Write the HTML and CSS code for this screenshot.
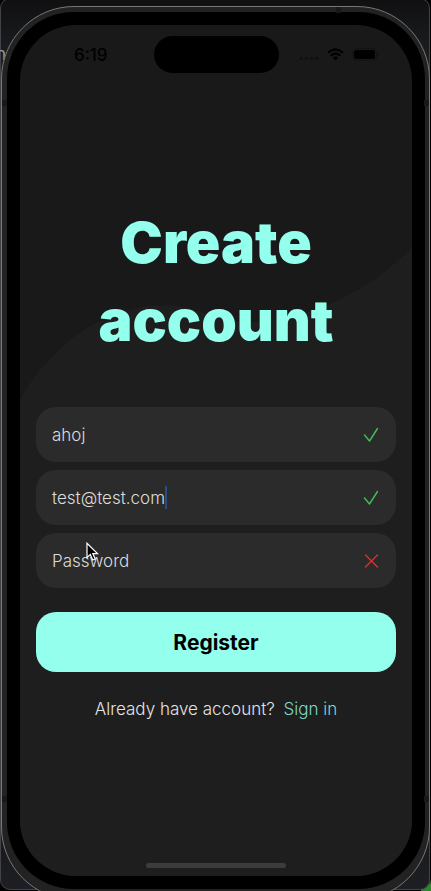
FILE: index.html
```html
<!DOCTYPE html>
<html lang="en">
<head>
<meta charset="utf-8">
<meta name="viewport" content="width=device-width, initial-scale=1">
<title>Create account</title>
<link rel="stylesheet" href="styles.css">
</head>
<body>
<div class="desktop">
  <div class="window" aria-hidden="true"></div>
  <span class="behind" aria-hidden="true">n</span>
  <div class="phone">
    <i class="seam seam-top"></i>
    <i class="seam seam-left seam-upper"></i>
    <i class="seam seam-right seam-upper"></i>
    <i class="seam seam-left seam-lower"></i>
    <i class="seam seam-right seam-lower"></i>
    <div class="bezel">
      <div class="screen">
        <svg class="wave" viewBox="0 0 392 851" preserveAspectRatio="none" aria-hidden="true">
          <path d="M0 374C36 314 88 280 147 280C176 280 192 296 220 297C278 299 346 271 392 222V851H0Z"/>
        </svg>
        <header class="status">
          <span class="time">6:19</span>
          <span class="island"></span>
          <span class="indicators">
            <svg class="signal" width="20" height="12" viewBox="0 0 20 12" aria-hidden="true"><g fill="#111"><circle cx="2" cy="9.500" r="1.700"/><circle cx="7.300" cy="9.500" r="1.700"/><circle cx="12.600" cy="9.500" r="1.700"/><circle cx="17.900" cy="9.500" r="1.700"/></g></svg>
            <svg width="17" height="13" viewBox="0 0 17 13" aria-hidden="true"><g fill="none" stroke="#000" stroke-width="2.200"><path d="M1 4.700Q8.500 -2.100 16 4.700"/><path d="M3.700 7.700Q8.500 3.300 13.300 7.700"/></g><path d="M5.800 9.700Q8.500 7.300 11.200 9.700L8.500 12.500Z"/></svg>
            <svg class="battery" width="27" height="13" viewBox="0 0 27 13" aria-hidden="true"><rect x=".5" y=".5" width="24" height="12" rx="4" fill="none" stroke="#131313"/><rect x="2" y="2" width="21" height="9" rx="2.500"/><path d="M25.500 4.500q1.500 .5 1.500 2t-1.500 2z" fill="#0e0e0e"/></svg>
          </span>
        </header>
        <main class="content">
          <h1>Create<br>account</h1>
          <form class="form">
            <label class="field">
              <input type="text" value="ahoj" aria-label="Name">
              <svg class="mark valid" viewBox="0 0 16 16" aria-hidden="true"><path d="M1.500 8L6.500 14L14.500 1.500"/></svg>
            </label>
            <label class="field">
              <input type="email" value="test@test.com" aria-label="Email">
              <i class="caret"></i>
              <svg class="mark valid" viewBox="0 0 16 16" aria-hidden="true"><path d="M1.500 8L6.500 14L14.500 1.500"/></svg>
            </label>
            <label class="field">
              <input type="password" placeholder="Password" aria-label="Password">
              <svg class="mark invalid" viewBox="0 0 16 16" aria-hidden="true"><path d="M2.500 2L14.500 14M14.500 2L2.500 14"/></svg>
              <svg class="pointer" width="13" height="20" viewBox="0 0 13 20" aria-hidden="true"><path d="M1 1.200V15.500L4.300 12.500L6.700 18L9.200 17L6.800 11.600H11.500Z"/></svg>
            </label>
            <button class="register" type="button">Register</button>
          </form>
          <p class="signin">Already have account? <a href="#signin">Sign in</a></p>
        </main>
        <div class="home"></div>
      </div>
    </div>
  </div>
</div>
</body>
</html>
```

FILE: styles.css
```css
* {
  box-sizing: border-box;
}

body {
  margin: 0;
  background: #000;
  color: #e4e4e4;
  font-family: Inter, "Open Sans", sans-serif;
  font-size: 17px;
  font-weight: 300;
}

.desktop {
  position: relative;
  height: 100vh;
  padding: 6px 1px 0;
  overflow: hidden;
  background: linear-gradient(#000, #000) left / calc(100% - 10px) 100% no-repeat,
    linear-gradient(#000 calc(100% - 12px), #268c2b calc(100% - 6px));
}

.window {
  position: absolute;
  inset: -2px 1px 1px 0;
  border: 1px solid #454148;
  border-radius: 10px;
  background: linear-gradient(#101011, #1c1e22 60px, #131315 140px, #151517 90%, #1d1f24);
}

.behind {
  position: absolute;
  top: 44px;
  left: -4px;
  color: #999;
  font-size: 17px;
  font-weight: 400;
  line-height: 20px;
}

.phone {
  position: relative;
  height: calc(100vh + 3px);
  padding: 5px 4px 10px 5px;
  border: 1px solid #777;
  border-radius: 73px;
  background: #222;
}

.bezel {
  height: 100%;
  padding: 13px;
  border-radius: 67px;
  background: #000;
}

.seam {
  position: absolute;
  width: 5px;
  height: 6px;
  background: #181818;
}

.seam-top {
  top: 0;
  right: 88px;
}

.seam-left {
  left: 0;
}

.seam-right {
  right: 0;
}

.seam-upper {
  top: 93px;
}

.seam-lower {
  bottom: 97px;
}

.screen {
  position: relative;
  display: flex;
  flex-direction: column;
  height: 100%;
  overflow: hidden;
  border-radius: 56px;
  background: #191919;
}

.wave {
  position: absolute;
  inset: 0;
  width: 100%;
  height: 100%;
  fill: #1e1e1e;
}

.status,
.content,
.home {
  position: relative;
}

.status {
  display: grid;
  grid-template-columns: 1fr 125px 1fr;
  align-items: center;
  padding-top: 11px;
  color: #000;
}

.time {
  padding-left: 8px;
  font-size: 17px;
  font-weight: 500;
  line-height: 20px;
  text-align: center;
}

.island {
  height: 37px;
  border-radius: 20px;
  background: #000;
}

.indicators {
  display: flex;
  align-items: center;
  justify-content: flex-end;
  gap: 8px;
  padding-right: 33px;
}

.content {
  display: flex;
  flex: 1;
  flex-direction: column;
  padding: 131px 16px 0;
}

h1 {
  margin: 0 0 47px;
  color: #93ffec;
  font-size: 57px;
  font-weight: 900;
  line-height: 78px;
  text-align: center;
}

.form {
  display: flex;
  flex-direction: column;
  gap: 8px;
}

.field {
  position: relative;
  display: flex;
  align-items: center;
  height: 55px;
  padding: 0 17px 0 16px;
  border-radius: 20px;
  background: #2b2b2b;
}

input {
  field-sizing: content;
  min-width: 0;
  padding: 0;
  border: 0;
  outline: 0;
  background: transparent;
  color: #dcdcdc;
  font: inherit;
  line-height: 24px;
}

input::placeholder {
  color: #dcdcdc;
  opacity: 1;
}

.caret {
  width: 2px;
  height: 23px;
  background: #294d86;
}

.mark {
  width: 16px;
  height: 16px;
  margin-left: auto;
  fill: none;
  stroke-linecap: round;
  stroke-linejoin: round;
  stroke-width: 1.4;
}

.valid {
  stroke: #43bd58;
}

.invalid {
  stroke: #d13531;
}

.pointer {
  position: absolute;
  top: 9px;
  left: 50px;
  fill: #000;
  stroke: #fff;
  stroke-width: 1.2;
}

.register {
  height: 60px;
  margin-top: 16px;
  border: 0;
  border-radius: 20px;
  background: #93ffec;
  color: #000;
  font: inherit;
  font-size: 21px;
  font-weight: 700;
}

.signin {
  margin: 25px 0 0;
  line-height: 24px;
  text-align: center;
}

.signin a {
  margin-left: 4px;
  color: #80d9ca;
  text-decoration: none;
}

.home {
  align-self: center;
  width: 140px;
  height: 5px;
  margin-bottom: 8px;
  border-radius: 3px;
  background: #3c3c3c;
}
```
